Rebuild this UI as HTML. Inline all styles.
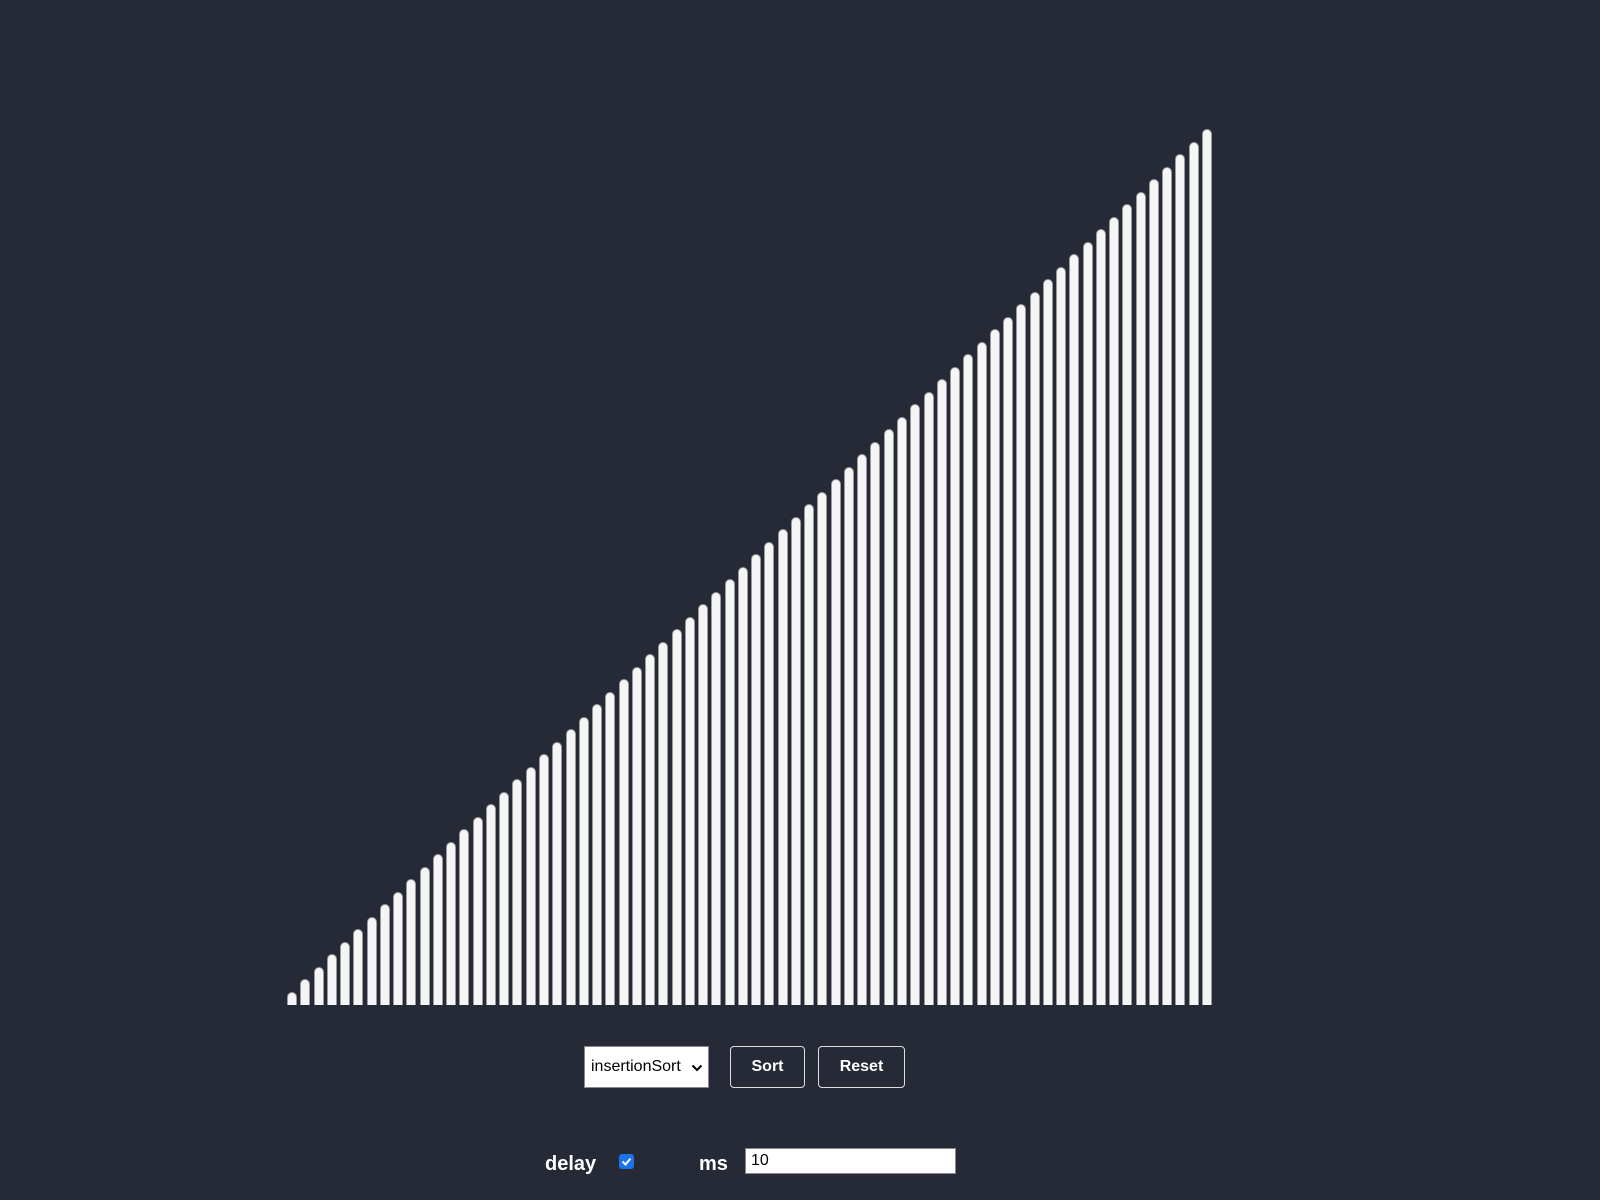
<!DOCTYPE html>
<html><head><style>
html,body{margin:0;padding:0;width:1600px;height:1200px;background:#262a37;overflow:hidden;font-family:"Liberation Sans",sans-serif}
.bar{position:absolute;bottom:195px;width:8px;background:#f5f5f5;border:1px solid #9a9a9a;border-bottom:none;border-radius:5px 5px 0 0}
.sel{position:absolute;left:584px;top:1046px;width:125px;height:42px;background:#fff;border:1px solid #888;box-sizing:border-box;font-size:16px;color:#000;line-height:40px;padding-left:6px}
.btn{position:absolute;top:1046px;height:42px;border:1px solid #ddd;border-radius:4px;box-sizing:border-box;color:#fff;font-weight:bold;font-size:16px;text-align:center;line-height:40px}
.lbl{position:absolute;color:#fff;font-weight:bold;font-size:20px;top:1153px}
</style></head><body>
<div id="bars"></div>
<script>
var h='';for(var i=0;i<70;i++){var x=287+i*13.26;var ht=(i+1)*12.5;h+='<div class="bar" style="left:'+x.toFixed(1)+'px;height:'+ht+'px"></div>';}
document.getElementById('bars').innerHTML=h;
</script>
<div class="sel">insertionSort <svg width="12" height="10" style="position:absolute;right:5px;top:16px"><path d="M1.5 2.5 L6 7 L10.5 2.5" stroke="#000" stroke-width="2" fill="none"/></svg></div>
<div class="btn" style="left:730px;width:75px">Sort</div>
<div class="btn" style="left:818px;width:87px">Reset</div>
<div class="lbl" style="left:545px">delay</div>
<div style="position:absolute;left:619px;top:1154px;width:15px;height:15px;background:#1a73e8;border-radius:3px"><svg width="15" height="15"><path d="M3.5 7.5 L6.5 10.5 L11.5 4.5" stroke="#fff" stroke-width="2" fill="none"/></svg></div>
<div class="lbl" style="left:699px">ms</div>
<div style="position:absolute;left:745px;top:1148px;width:211px;height:26px;background:#fff;border:1px solid #888;box-sizing:border-box;font-size:16px;line-height:24px;padding-left:5px;color:#000">10</div>
</body></html>
